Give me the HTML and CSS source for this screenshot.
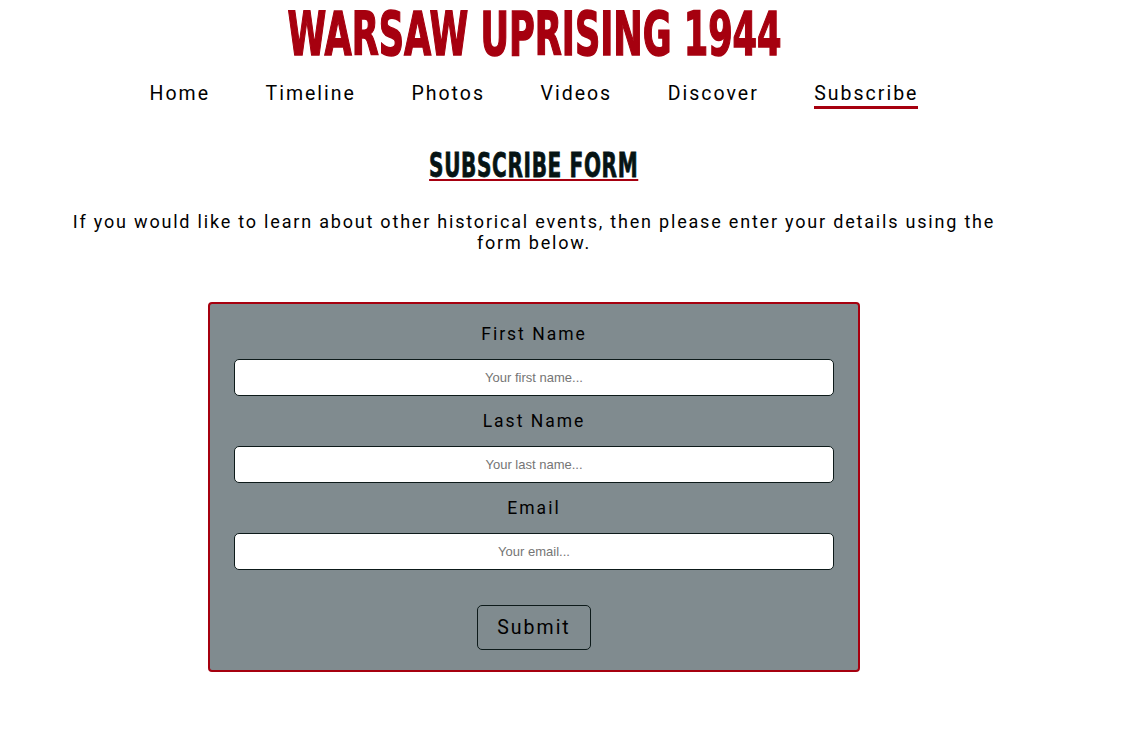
FILE: index.html
```html
<!DOCTYPE html>
<html lang="en">
<head>
<meta charset="utf-8">
<title>Warsaw Uprising 1944 - Subscribe</title>
<link rel="stylesheet" href="styles.css">
</head>
<body>
<div class="page">
  <header class="site-header">
    <h1 class="site-title">WARSAW UPRISING 1944</h1>
    <nav class="main-nav">
      <a href="#" class="nav-link">Home</a>
      <a href="#" class="nav-link">Timeline</a>
      <a href="#" class="nav-link">Photos</a>
      <a href="#" class="nav-link">Videos</a>
      <a href="#" class="nav-link">Discover</a>
      <a href="#" class="nav-link active">Subscribe</a>
    </nav>
  </header>
  <main class="content">
    <h2 class="section-title">SUBSCRIBE FORM</h2>
    <p class="intro">If you would like to learn about other historical events, then please enter your details using the form below.</p>
    <form class="subscribe-form">
      <label class="field-label" for="fname">First Name</label>
      <input class="field-input" id="fname" type="text" placeholder="Your first name...">
      <label class="field-label" for="lname">Last Name</label>
      <input class="field-input" id="lname" type="text" placeholder="Your last name...">
      <label class="field-label" for="email">Email</label>
      <input class="field-input" id="email" type="email" placeholder="Your email...">
      <button class="submit-btn" type="submit">Submit</button>
    </form>
  </main>
</div>
</body>
</html>
```

FILE: styles.css
```css
html, body {
  margin: 0;
  padding: 0;
  background: #ffffff;
}

body {
  font-family: Roboto, "Liberation Sans", sans-serif;
  color: #000000;
}

.page {
  width: 1050px;
  margin-left: 9px;
  display: flex;
  flex-direction: column;
  align-items: center;
}

.site-header {
  display: flex;
  flex-direction: column;
  align-items: center;
}

.site-title {
  margin: 0;
  padding-top: 4px;
  height: 60px;
  font-family: "DejaVu Sans Condensed", "Liberation Sans", sans-serif;
  font-stretch: condensed;
  font-weight: bold;
  font-size: 60px;
  line-height: 60px;
  color: #a6000f;
  letter-spacing: 0;
  -webkit-text-stroke: 1.5px #a6000f;
  transform: scaleX(0.651);
  white-space: nowrap;
}

.main-nav {
  display: flex;
  gap: 55.5px;
  margin-top: 18px;
}

.nav-link {
  font-size: 19.5px;
  letter-spacing: 2px;
  color: #000000;
  text-decoration: none;
  line-height: 23px;
  padding-bottom: 1px;
  border-bottom: 3px solid transparent;
}

.nav-link.active {
  border-bottom-color: #a6000f;
}

.content {
  display: flex;
  flex-direction: column;
  align-items: center;
  width: 100%;
}

.section-title {
  margin: 36px 0 0;
  font-family: "DejaVu Sans Condensed", "Liberation Sans", sans-serif;
  font-stretch: condensed;
  font-weight: bold;
  font-size: 34px;
  line-height: 40px;
  letter-spacing: 1px;
  color: #061414;
  -webkit-text-stroke: 0.8px #061414;
  text-decoration: underline;
  text-decoration-color: #a6000f;
  text-decoration-thickness: 2px;
  text-underline-offset: 2px;
  transform: scaleX(0.655);
}

.intro {
  margin: 26px 0 0;
  width: 950px;
  text-align: center;
  font-size: 18px;
  line-height: 21px;
  letter-spacing: 1.8px;
}

.subscribe-form {
  margin-top: 49px;
  width: 600px;
  padding: 20px 24px 20px;
  background: #808b8f;
  border: 2px solid #a6000f;
  border-radius: 4px;
  display: flex;
  flex-direction: column;
  align-items: center;
}

.field-label {
  display: block;
  font-size: 17.5px;
  line-height: 21px;
  letter-spacing: 2px;
  color: #000000;
  margin: 15px 0 14px;
}

.field-label:first-child {
  margin-top: 0;
}

.field-input {
  box-sizing: border-box;
  width: 600px;
  height: 37px;
  margin: 0;
  border: 1px solid #0d1a1a;
  border-radius: 5px;
  background: #ffffff;
  font-family: "Liberation Sans", Arial, sans-serif;
  font-size: 13px;
  text-align: center;
  color: #000000;
}

.field-input::placeholder {
  color: #757575;
}

.submit-btn {
  margin-top: 35px;
  box-sizing: border-box;
  width: 114px;
  height: 45px;
  border: 1px solid #0d1a1a;
  border-radius: 5px;
  background: transparent;
  font-family: Roboto, "Liberation Sans", sans-serif;
  font-size: 19.5px;
  letter-spacing: 2px;
  color: #000000;
  padding: 0;
}
```
